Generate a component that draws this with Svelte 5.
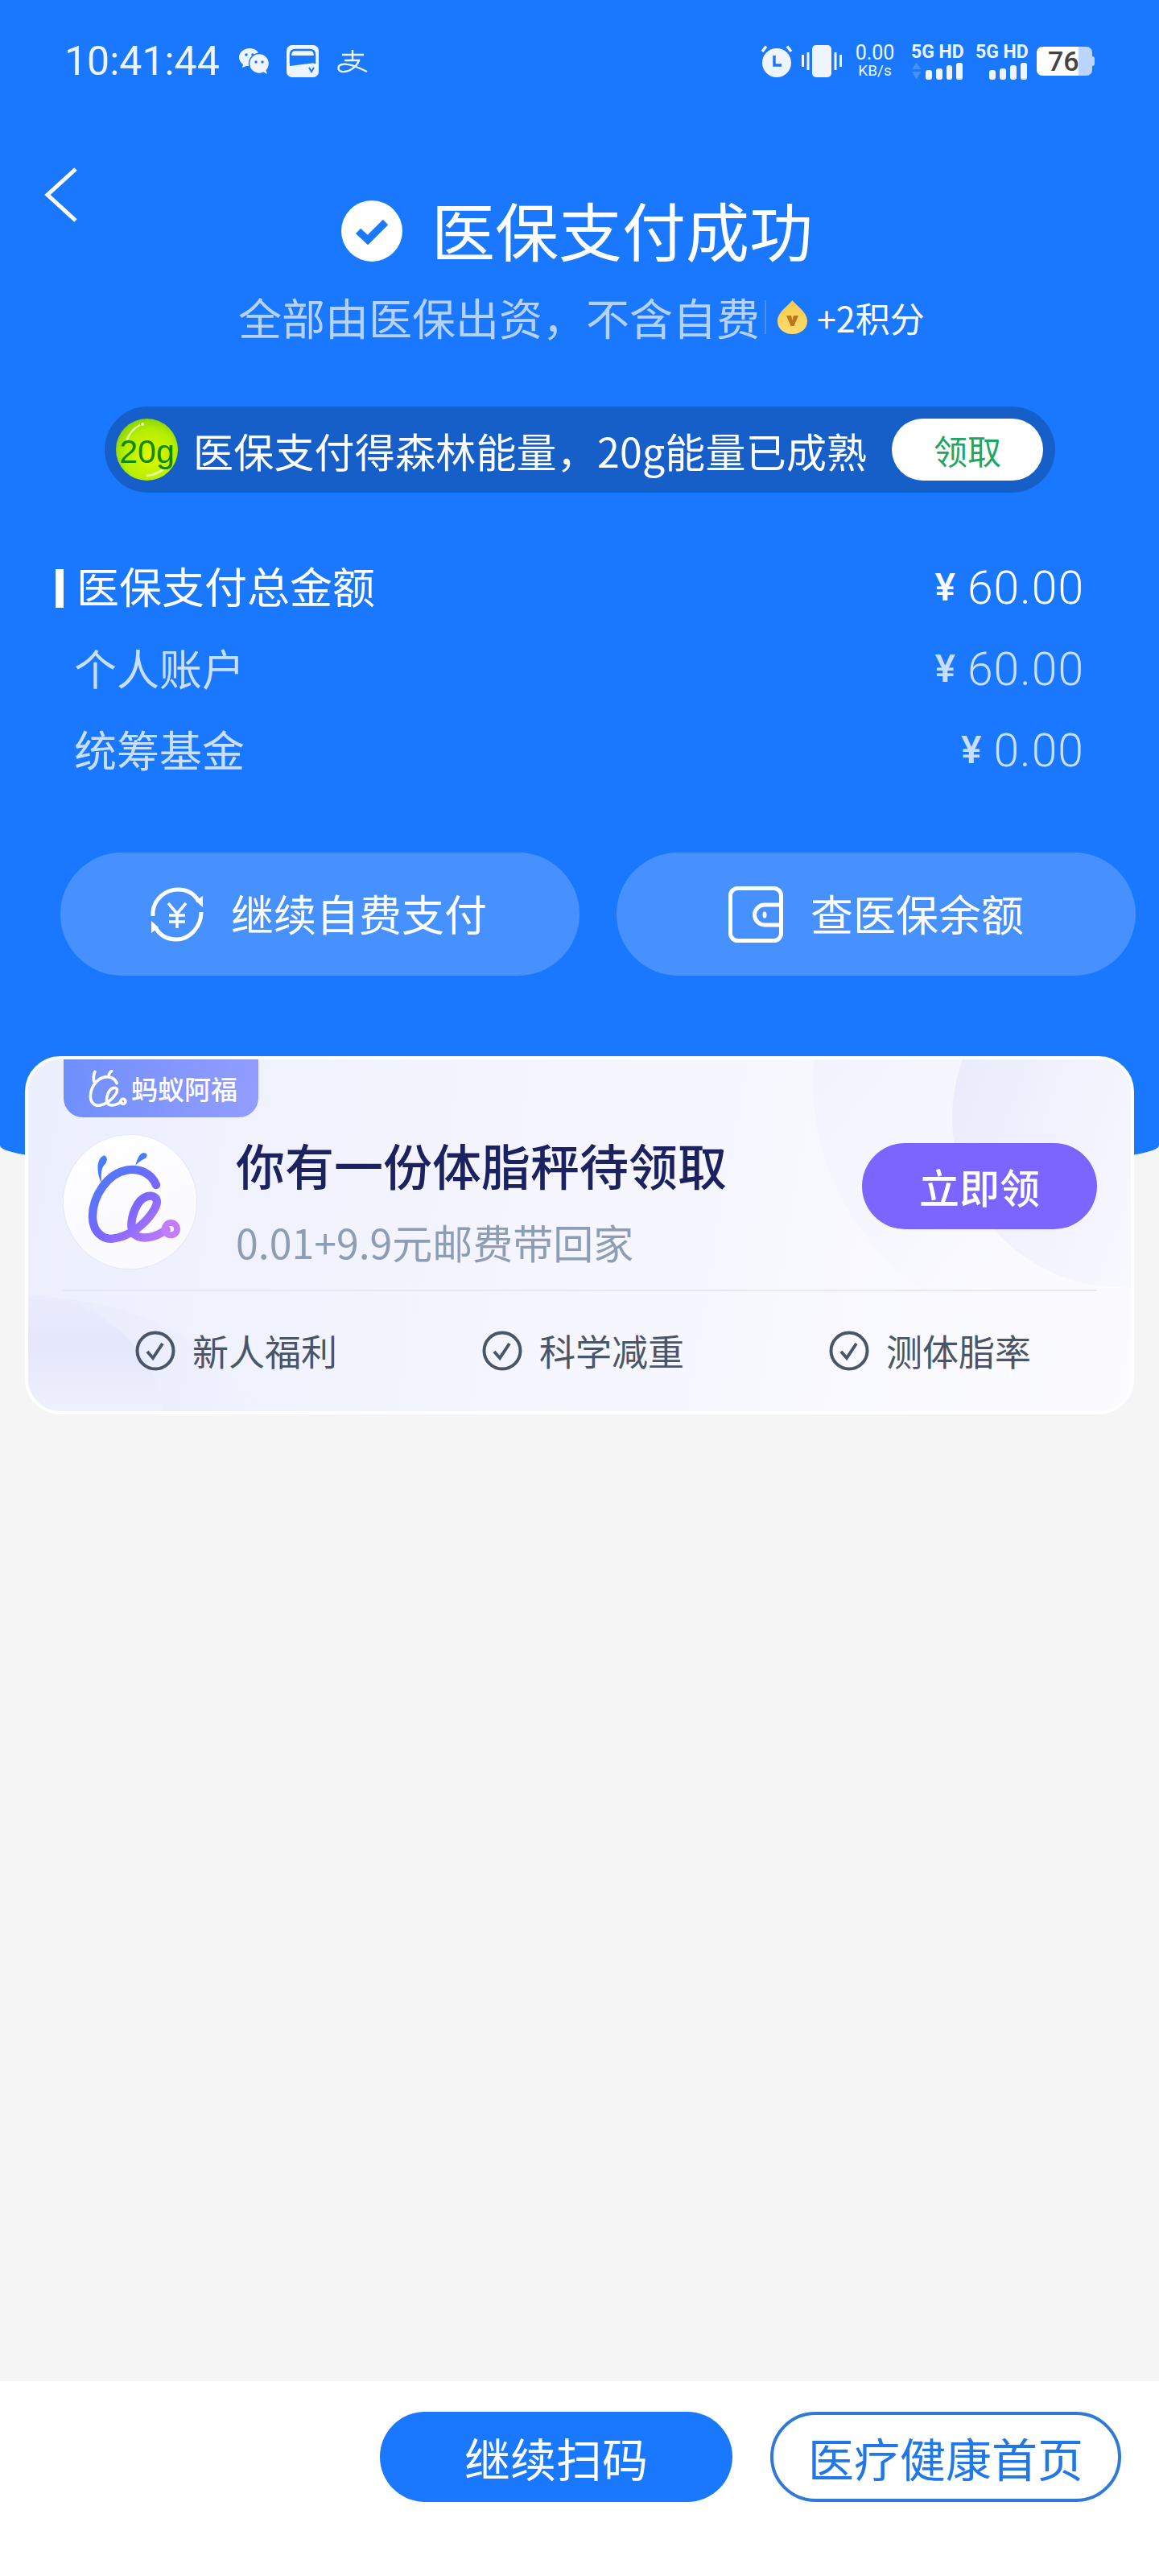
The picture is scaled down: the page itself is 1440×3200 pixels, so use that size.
<script>
  const logoPath =
    "M582 548C565 505 520 485 475 492C400 505 345 590 345 665C345 725 385 752 420 748C475 742 540 700 575 640C600 595 570 582 545 592C510 605 490 660 490 700C490 745 530 750 570 740C590 735 605 725 620 715";
  const rows = [
    { label: "医保支付总金额", amount: "60.00", main: true },
    { label: "个人账户", amount: "60.00" },
    { label: "统筹基金", amount: "0.00" },
  ];
  const perks = ["新人福利", "科学减重", "测体脂率"];
  const signalBars = [12, 14, 18, 21];
</script>

{#snippet signal(arrows)}
  <div class="signal">
    <span class="net-type">5G HD</span>
    <div class="bars">
      {#if arrows}
        <svg class="arrows" width="14" height="22" viewBox="0 0 14 22">
          <path d="M7 0L13 9H1Z" fill="#4a90ff" />
          <path d="M7 22L13 12H1Z" fill="#4a90ff" />
        </svg>
      {/if}
      {#each signalBars as h}
        <i style="height:{h}px"></i>
      {/each}
    </div>
  </div>
{/snippet}

<div class="page">
  <section class="hero">
    <header class="status">
      <div class="status-left">
        <span class="time">10:41:44</span>
        <svg class="wechat" width="38" height="32" viewBox="0 0 38 32">
          <path d="M13 0C6 0 0 5 0 11C0 15 2 18 5 20L4 24L9 22L16 22C25 20 26 6 22 3C20 1 16 0 13 0Z" fill="#eef5ff" />
          <circle cx="9" cy="8" r="1.8" fill="#1a78ff" />
          <circle cx="17" cy="8" r="1.8" fill="#1a78ff" />
          <circle cx="25" cy="19" r="12.5" fill="#eef5ff" stroke="#1a78ff" stroke-width="1.5" />
          <path d="M28 28L35 32L33 26Z" fill="#eef5ff" />
          <circle cx="21" cy="17" r="1.7" fill="#1a78ff" />
          <circle cx="29" cy="17" r="1.7" fill="#1a78ff" />
        </svg>
        <svg class="pass" width="40" height="40" viewBox="0 0 40 40">
          <rect width="40" height="40" rx="7" fill="#eef5ff" />
          <path d="M5 23V12Q5 6 11 6H29Q35 6 35 12V23" fill="none" stroke="#1a78ff" stroke-width="2.5" />
          <path d="M4 13H36V22L4 26Z" fill="#1a78ff" />
          <path d="M5 14.5H35V21L5 24.5Z" fill="#1a78ff" />
          <path d="M28 28L31 33L34 28" fill="none" stroke="#1a78ff" stroke-width="2" />
        </svg>
        <svg class="ali" width="38" height="30" viewBox="0 0 38 30">
          <path d="M6 7H33M19 1V14M9 14H27C24 22 15 29 6 28C0 27 0 20 6 19C14 17 26 23 37 28" fill="none" stroke="#eef5ff" stroke-width="2.4" />
        </svg>
      </div>
      <div class="status-right">
        <svg class="alarm" width="40" height="40" viewBox="0 0 40 40">
          <circle cx="20" cy="22" r="18" fill="#eef5ff" />
          <path d="M17 13V25H26" fill="none" stroke="#1a78ff" stroke-width="3.5" />
          <path d="M2 8L7 1.5M38 8L33 1.5" stroke="#eef5ff" stroke-width="3.5" />
        </svg>
        <svg class="vibrate" width="50" height="40" viewBox="0 0 50 40">
          <rect x="13" width="24" height="40" rx="5" fill="#eef5ff" />
          <path d="M1.5 12V27M8 9V31M42 9V31M48.5 12V27" stroke="#eef5ff" stroke-width="3" />
        </svg>
        <div class="speed"><b>0.00</b><span>KB/s</span></div>
        {@render signal(true)}
        {@render signal(false)}
        <div class="battery"><span>76</span></div>
      </div>
    </header>

    <div class="top">
      <svg class="back" width="42" height="68" viewBox="0 0 42 68">
        <path d="M39 2L4 34L39 66" fill="none" stroke="#fff" stroke-width="5" />
      </svg>
      <div class="title-row">
        <svg width="76" height="76" viewBox="0 0 76 76">
          <circle cx="38" cy="38" r="38" fill="#fff" />
          <path d="M21 38L33 49L55 27" fill="none" stroke="#1a78ff" stroke-width="9" />
        </svg>
        <h1>医保支付成功</h1>
      </div>
    </div>

    <div class="sub-row">
      <span class="sub">全部由医保出资，不含自费</span>
      <i class="sep"></i>
      <svg width="37" height="42" viewBox="0 0 37 42">
        <defs>
          <linearGradient id="coin" x1="0" y1="0" x2="0" y2="1">
            <stop offset="0" stop-color="#f3c94a" />
            <stop offset="1" stop-color="#fddc70" />
          </linearGradient>
        </defs>
        <path d="M18.5 0C24 7 37 15 37 26C37 36 28 42 18.5 42C9 42 0 36 0 26C0 15 13 7 18.5 0Z" fill="url(#coin)" />
        <path d="M11 19H17L18.5 25L20 19H26L20.5 32H16.5Z" fill="#b9781c" />
      </svg>
      <span class="points">+2积分</span>
    </div>

    <div class="energy">
      <div class="ball">
        <svg width="77" height="77" viewBox="0 0 77 77">
          <defs>
            <radialGradient id="lime" cx="0.55" cy="0.6" r="0.65">
              <stop offset="0" stop-color="#e0f800" />
              <stop offset="0.65" stop-color="#b4ee00" />
              <stop offset="1" stop-color="#7fd000" />
            </radialGradient>
          </defs>
          <circle cx="38.5" cy="38.5" r="38.5" fill="url(#lime)" />
          <path d="M13 28Q18 14 30 8" fill="none" stroke="#e8fca0" stroke-width="2.5" />
          <circle cx="33" cy="7" r="2" fill="#f4ffd0" />
          <path d="M38 71Q52 70 62 60" fill="none" stroke="#e8fca0" stroke-width="3" />
        </svg>
        <span>20g</span>
      </div>
      <span class="energy-text">医保支付得森林能量，20g能量已成熟</span>
      <span class="claim">领取</span>
    </div>

    <div class="amounts">
      {#each rows as row}
        <div class="row" class:main={row.main}>
          <span class="label">{row.label}</span>
          <span class="amount"><em>¥</em>{row.amount}</span>
        </div>
      {/each}
    </div>

    <div class="actions">
      <div class="action">
        <svg width="66" height="68" viewBox="0 0 66 68" fill="none" stroke="#fff">
          <path d="M3 36V30C5 15 18 3 34 3C46 3 55 9 60 18" stroke-width="5" />
          <path d="M63 32V31C63 48 50 65 32 65C20 65 11 59 6 50" stroke-width="5" />
          <path d="M65 11V25L56 17Z" fill="#fff" stroke="none" />
          <path d="M1 57V42L10 50Z" fill="#fff" stroke="none" />
          <path d="M22 20L33 33L44 20M33 33V51M23 35H43M23 43H43" stroke-width="3.5" />
        </svg>
        <span>继续自费支付</span>
      </div>
      <div class="action second">
        <svg width="68" height="70" viewBox="0 0 68 70" fill="none" stroke="#fff" stroke-width="5">
          <rect x="2.5" y="2.5" width="63" height="65" rx="9" />
          <path d="M65 23H45A12.5 12.5 0 0 0 45 48H65" />
          <ellipse cx="45" cy="35.5" rx="2.5" ry="4" fill="#fff" stroke="none" />
        </svg>
        <span>查医保余额</span>
      </div>
    </div>

    <article class="card">
      <i class="blob b1"></i>
      <i class="blob b2"></i>
      <i class="blob b3"></i>
      <i class="blob b4"></i>
      <div class="badge">
        <svg width="48" height="46" viewBox="330 428 342 332" fill="none" stroke="#fff" stroke-width="26" stroke-linecap="round">
          <path d={logoPath} />
          <circle cx="637" cy="712" r="22" />
          <path d="M385 445Q365 490 378 535M535 438Q515 450 510 472" />
        </svg>
        <span>蚂蚁阿福</span>
      </div>
      <div class="offer">
        <div class="avatar">
          <svg width="165" height="166" viewBox="237 362 495 498" fill="none">
            <defs>
              <linearGradient id="fu" gradientUnits="userSpaceOnUse" x1="400" y1="470" x2="640" y2="740">
                <stop offset="0" stop-color="#4a7cf6" />
                <stop offset="0.5" stop-color="#7a66ff" />
                <stop offset="1" stop-color="#c47cfb" />
              </linearGradient>
            </defs>
            <path d={logoPath} stroke="url(#fu)" stroke-width="31" stroke-linecap="round" />
            <circle cx="637" cy="712" r="23" stroke="#c47cfb" stroke-width="24" />
            <path d="M388 438C405 445 400 465 385 478C375 495 378 520 378 540C362 510 355 450 388 438Z" fill="#4a7cf6" />
            <path d="M535 428C555 430 550 448 535 452C525 458 515 465 505 475C510 455 518 432 535 428Z" fill="#4a7cf6" />
          </svg>
        </div>
        <div class="offer-text">
          <h2>你有一份体脂秤待领取</h2>
          <p>0.01+9.9元邮费带回家</p>
        </div>
        <span class="get">立即领</span>
      </div>
      <div class="divider"></div>
      <div class="perks">
        {#each perks as perk}
          <div class="perk">
            <svg width="50" height="50" viewBox="0 0 50 50" fill="none" stroke="#4a5568">
              <circle cx="25" cy="25" r="22.5" stroke-width="4" />
              <path d="M15 26L22 34L34 16" stroke-width="4" />
            </svg>
            <span>{perk}</span>
          </div>
        {/each}
      </div>
    </article>
  </section>

  <main class="body"></main>

  <footer class="footer">
    <span class="btn solid">继续扫码</span>
    <span class="btn outline">医疗健康首页</span>
  </footer>
</div>

<style>
  :global(body) {
    background: #f5f5f5;
  }
  .page {
    display: flex;
    flex-direction: column;
    height: 3200px;
    overflow: hidden;
    font-family: "Noto Sans CJK SC", "Noto Sans", sans-serif;
    color: #fff;
  }
  i,
  em {
    display: block;
    font-style: normal;
  }

  .hero {
    flex: none;
    height: 1463px;
    background: #1a78ff;
    border-radius: 0 0 50% 50% / 0 0 40px 40px;
  }

  .status {
    height: 152px;
    padding: 0 83px 0 80px;
    display: flex;
    align-items: center;
    justify-content: space-between;
    box-sizing: border-box;
  }
  .status-left,
  .status-right {
    display: flex;
    align-items: center;
  }
  .time {
    font: 400 50px/1 Roboto, sans-serif;
    color: #eef5ff;
    width: 217px;
  }
  .pass {
    margin-left: 21px;
  }
  .ali {
    margin-left: 23px;
  }
  .vibrate {
    margin-left: 11px;
  }
  .speed {
    margin-left: 16px;
    width: 50px;
    display: flex;
    flex-direction: column;
    align-items: center;
    font-family: Roboto, sans-serif;
    color: #eef5ff;
  }
  .speed b {
    font-size: 25px;
    font-weight: 400;
    line-height: 24px;
  }
  .speed span {
    font-size: 19px;
    line-height: 20px;
  }
  .signal {
    margin-left: 20px;
    width: 64px;
    color: #eef5ff;
  }
  .signal + .signal {
    margin-left: 16px;
  }
  .net-type {
    display: block;
    font: 700 23px/24px Roboto, sans-serif;
    white-space: nowrap;
  }
  .bars {
    display: flex;
    align-items: flex-end;
    justify-content: flex-end;
    gap: 5px;
    height: 22px;
  }
  .bars i {
    width: 8px;
    border-radius: 3px;
    background: #eef5ff;
  }
  .battery {
    position: relative;
    margin-left: 12px;
    width: 69px;
    height: 36px;
    border-radius: 7px;
    background: linear-gradient(90deg, #fff 52px, #bcd5ff 52px);
    color: #444;
    font: 500 34px/36px Roboto, sans-serif;
    padding-left: 14px;
    box-sizing: border-box;
  }
  .battery::after {
    content: "";
    position: absolute;
    right: -3px;
    top: 12px;
    width: 3px;
    height: 12px;
    border-radius: 0 3px 3px 0;
    background: #bcd5ff;
  }

  .top {
    display: grid;
    grid-template-columns: 55px 42px 1fr;
    padding-top: 56px;
  }
  .back {
    grid-column: 2;
  }
  .title-row {
    display: flex;
    align-items: center;
    height: 90px;
    margin: 34px 0 0 327px;
    gap: 36px;
  }
  .title-row svg {
    flex: none;
  }
  h1 {
    margin: -5px 0 0;
    font-size: 79px;
    font-weight: 400;
    line-height: 90px;
    white-space: nowrap;
  }

  .sub-row {
    display: flex;
    align-items: center;
    height: 70px;
    margin: 27px 0 0 296px;
  }
  .sub {
    font-size: 54px;
    line-height: 70px;
    color: #b5d2ff;
    white-space: nowrap;
  }
  .sep {
    width: 2px;
    height: 42px;
    background: #4a92fa;
    margin: 0 14px 0 6px;
  }
  .points {
    font-size: 43px;
    margin-left: 12px;
    white-space: nowrap;
  }

  .energy {
    margin: 76px 129px 0 130px;
    height: 107px;
    border-radius: 54px;
    background: #165fc9;
    display: flex;
    align-items: center;
    padding: 0 15px 0 14px;
  }
  .ball {
    width: 77px;
    height: 77px;
    flex: none;
    position: relative;
    display: flex;
    align-items: center;
    justify-content: center;
  }
  .ball svg {
    position: absolute;
    inset: 0;
  }
  .ball span {
    position: relative;
    font: 400 41px/1 "Liberation Sans", sans-serif;
    color: #0a8a00;
    margin-top: 6px;
  }
  .energy-text {
    margin-left: 19px;
    font-size: 50px;
    letter-spacing: 0.2px;
    white-space: nowrap;
    flex: 1;
  }
  .claim {
    width: 188px;
    height: 77px;
    flex: none;
    border-radius: 39px;
    background: #fff;
    color: #1aa864;
    font-size: 42px;
    line-height: 77px;
    text-align: center;
  }

  .amounts {
    margin: 65px 93px 0 92px;
  }
  .row {
    height: 101px;
    display: flex;
    align-items: center;
    justify-content: space-between;
    color: #c9dfff;
    position: relative;
  }
  .row.main {
    color: #fff;
  }
  .row.main::before {
    content: "";
    position: absolute;
    left: -23px;
    top: 30px;
    width: 10px;
    height: 48px;
    background: #fff;
  }
  .row.main .label {
    margin: -2px 0 0 3px;
  }
  .label {
    font-size: 53px;
    white-space: nowrap;
  }
  .amount {
    display: flex;
    align-items: center;
    margin-top: 5px;
    font: 300 57px/1 Roboto, sans-serif;
    letter-spacing: 1px;
  }
  .amount em {
    font-weight: 500;
    font-size: 48px;
    margin-right: 14px;
  }

  .actions {
    margin: 79px 29px 0 75px;
    display: grid;
    grid-template-columns: 1fr 1fr;
    gap: 46px;
  }
  .action {
    height: 153px;
    border-radius: 77px;
    background: #4791ff;
    display: flex;
    align-items: center;
    padding-left: 112px;
    gap: 34px;
    font-size: 53px;
    white-space: nowrap;
  }
  .action span {
    margin-bottom: 3px;
  }
  .action.second {
    padding-left: 139px;
  }

  .card {
    position: relative;
    margin: 100px 31px 0;
    height: 445px;
    box-sizing: border-box;
    border: 4px solid #fff;
    border-radius: 44px;
    overflow: hidden;
    background: linear-gradient(100deg, #eceffd 0%, #f4f5fe 45%, #fcfcff 100%);
    color: #1c2260;
  }
  .blob {
    position: absolute;
    border-radius: 50%;
  }
  .b1 {
    left: 975px;
    top: -290px;
    width: 680px;
    height: 640px;
    background: linear-gradient(130deg, #eef0fc, #fafaff 60%);
  }
  .b2 {
    left: 1148px;
    top: -137px;
    width: 420px;
    height: 420px;
    background: linear-gradient(110deg, #e8eafb, #f8f8ff 65%);
  }
  .b3 {
    left: -310px;
    top: 295px;
    width: 620px;
    height: 450px;
    background: linear-gradient(90deg, rgba(228, 231, 252, 0.5) 50%, rgba(240, 241, 253, 0.2));
  }
  .b4 {
    left: -170px;
    top: 293px;
    width: 340px;
    height: 340px;
    background: linear-gradient(180deg, #eaecfd 0%, #e4e6fc 18%, #f0f1fd 42%);
  }
  .badge,
  .offer,
  .divider,
  .perks {
    position: relative;
  }
  .badge {
    margin-left: 44px;
    width: 242px;
    height: 72px;
    box-sizing: border-box;
    padding-left: 31px;
    display: flex;
    align-items: center;
    gap: 5px;
    border-radius: 0 0 24px 24px;
    background: linear-gradient(100deg, #6e8ffb, #949dff);
    color: #fff;
    font-size: 33px;
    font-weight: 500;
    white-space: nowrap;
  }
  .offer {
    display: flex;
    align-items: flex-start;
    margin: 22px 42px 0 44px;
  }
  .avatar {
    flex: none;
    width: 165px;
    height: 166px;
    box-sizing: border-box;
    border-radius: 50%;
    background: linear-gradient(160deg, #fff, #f9f9ff);
    box-shadow: 0 0 0 1px #e6e6f6;
  }
  .offer-text {
    margin-left: 49px;
    flex: 1;
  }
  h2 {
    margin: 0;
    font-size: 61px;
    font-weight: 500;
    line-height: 74px;
    white-space: nowrap;
  }
  p {
    margin: 25px 0 0;
    font-size: 50px;
    line-height: 66px;
    color: #8d9db5;
    white-space: nowrap;
  }
  .get {
    flex: none;
    margin-top: 10px;
    width: 292px;
    height: 107px;
    border-radius: 54px;
    background: #7a66ff;
    color: #fff;
    font-size: 50px;
    font-weight: 500;
    line-height: 107px;
    text-align: center;
  }
  .divider {
    height: 2px;
    margin: 26px 42px 0;
    background: #e6e7f6;
  }
  .perks {
    display: grid;
    grid-template-columns: repeat(3, 431px);
    padding-left: 133px;
    height: 147px;
    align-items: center;
  }
  .perk {
    display: flex;
    align-items: center;
    gap: 21px;
    color: #4a5568;
    font-size: 45px;
    white-space: nowrap;
  }

  .body {
    flex: 1;
    background: #f5f5f5;
  }
  .footer {
    flex: none;
    height: 242px;
    background: #fff;
    box-sizing: border-box;
    padding: 38px 47px 0 0;
    display: flex;
    justify-content: flex-end;
    gap: 47px;
  }
  .btn {
    width: 438px;
    height: 112px;
    box-sizing: border-box;
    border-radius: 56px;
    font-size: 57px;
    text-align: center;
    line-height: 112px;
    white-space: nowrap;
  }
  .solid {
    background: #1a78ff;
    color: #fff;
  }
  .outline {
    width: 436px;
    border: 4px solid #2f7ad9;
    color: #1f77e8;
    line-height: 104px;
  }
</style>
